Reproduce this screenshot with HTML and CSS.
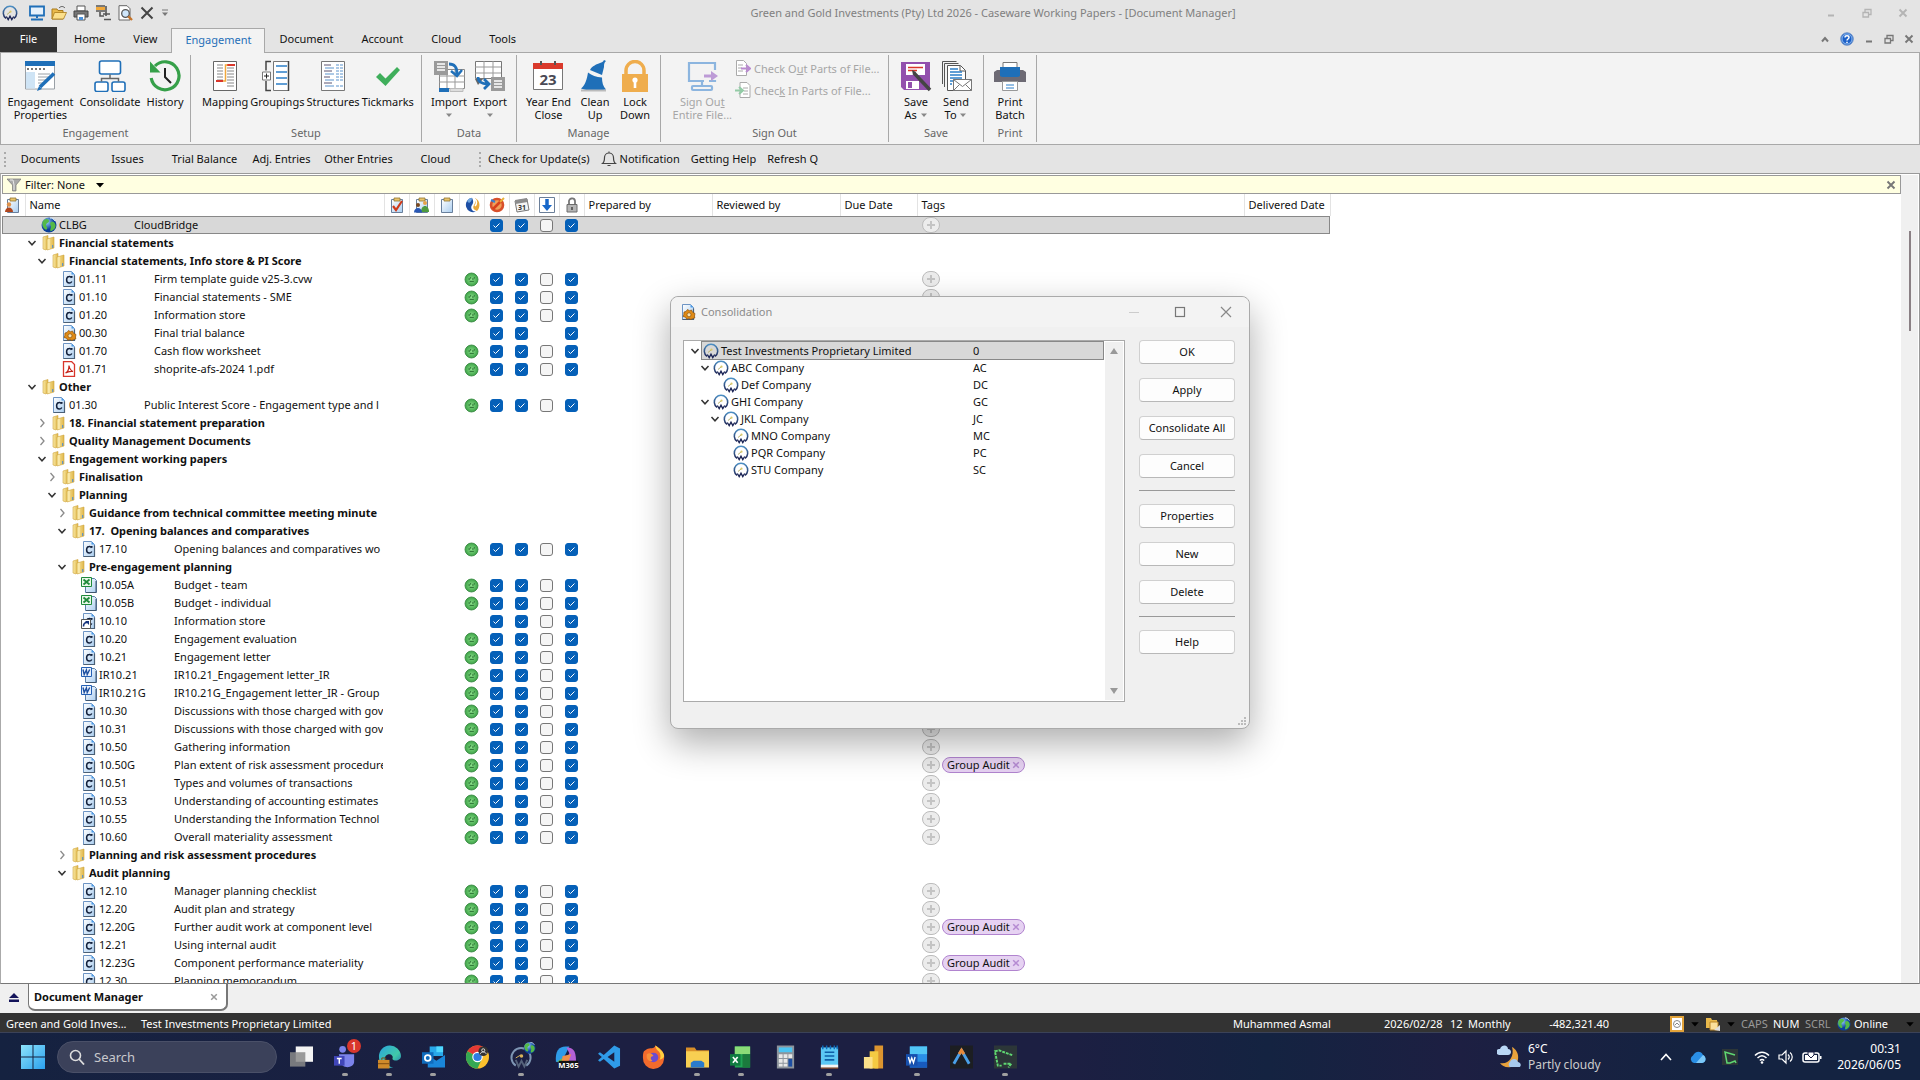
FILE: index.html
```html
<!DOCTYPE html>
<html lang="en">
<head>
<meta charset="utf-8">
<title>Green and Gold Investments (Pty) Ltd 2026 - Caseware Working Papers</title>
<link rel="stylesheet" href="styles.css">
</head>
<body>
<svg class="sprite" aria-hidden="true">
  <defs>
    <linearGradient id="gFolder" x1="0" x2="1"><stop offset="0" stop-color="#f9e9a4"/><stop offset="1" stop-color="#e0b64a"/></linearGradient>
    <linearGradient id="gPage" x1="0" x2="1" y2="1"><stop offset="0" stop-color="#fff"/><stop offset="1" stop-color="#a9cdf0"/></linearGradient>
    <radialGradient id="gGreen"><stop offset="0" stop-color="#8be08a"/><stop offset="1" stop-color="#3da347"/></radialGradient>
    <radialGradient id="gGlobe" cx=".35" cy=".3"><stop offset="0" stop-color="#9cd4ff"/><stop offset="1" stop-color="#0b3f9a"/></radialGradient>
    <linearGradient id="gRing" x2="0" y2="1"><stop offset="0" stop-color="#4c8fc4"/><stop offset="1" stop-color="#1d2657"/></linearGradient>
    <linearGradient id="gWin" x2="1" y2="1"><stop offset="0" stop-color="#8de3fb"/><stop offset="1" stop-color="#2aa0ee"/></linearGradient>
    <linearGradient id="gEdge" x2="1" y2="1"><stop offset="0" stop-color="#2aa5dd"/><stop offset=".6" stop-color="#41c9a8"/><stop offset="1" stop-color="#1766b8"/></linearGradient>
  </defs>
  <symbol id="caseware" viewBox="0 0 16 16"><path d="M4 13.400A6.700 6.700 0 1 1 12 13.400" fill="none" stroke="url(#gRing)" stroke-width="1.500"/><path d="M4.300 11.500l1.900 3 1.800-3.300 1.800 3.300 1.900-3" fill="none" stroke="#1d2657" stroke-width="1.400"/><path d="M5 9.500l3-2.500" stroke="#b9b26b" stroke-width="1"/><circle cx="8.500" cy="6.700" r="1.100" fill="#d9c96a"/></symbol>
  <symbol id="folder" viewBox="0 0 16 16"><path d="M2 2l5-1.5v12L5 15l-3-1z" fill="url(#gFolder)" stroke="#d0a640" stroke-width=".6"/><path d="M6 4l7-2v11l-7 2z" fill="url(#gFolder)" stroke="#cfa43a" stroke-width=".6"/><path d="M11.7 10v3" stroke="#4b8cd6" stroke-width="1"/><path d="M8 4v10" stroke="#fff3c0" stroke-width="1"/></symbol>
  <symbol id="page" viewBox="0 0 16 16"><path d="M2.5.5h8l3 3v12h-11z" fill="url(#gPage)" stroke="#6d94c4"/><path d="M10.500.5v3h3z" fill="#4d9be8"/><path d="M13.500 4.500v11h-11" fill="none" stroke="#4b6076" stroke-width="1.200"/></symbol>
  <symbol id="doc" viewBox="0 0 16 16"><use href="#page"/><path d="M10.800 6.700v-1.600M10.600 6.900C10 5.700 9 5.300 8.100 5.400 6.400 5.500 5.600 7 5.600 8.800s1 3.300 2.700 3.300c1.200 0 2-.7 2.500-1.600" fill="none" stroke="#12203c" stroke-width="1.500"/></symbol>
  <symbol id="gear" viewBox="0 0 16 16"><use href="#page"/><path d="M4 8l2-.5L7.500 5.500l2 1.200 2-.7 1 2.200L15 9.500l-.5 2.500.3 2-2.300.5-1.500 1-2.200-1-2 .7-1.300-2L3 12.500l.8-2z" fill="#e08b16" stroke="#8a4d08" stroke-width=".7"/><circle cx="9" cy="10.800" r="2" fill="#f8e2b0" stroke="#7a4405" stroke-width=".6"/></symbol>
  <symbol id="pdf" viewBox="0 0 16 16"><path d="M2.500.5h8l3 3v12h-11z" fill="#fff" stroke="#d8352b" stroke-width="1.300"/><path d="M4.500 12c2-1 3.500-4 3.500-7.500.5 3.500 1.500 5 4 6-3-.5-5 0-7.500 1.500z" fill="none" stroke="#c32219" stroke-width="1.200"/></symbol>
  <symbol id="xls" viewBox="0 0 16 16"><path d="M4.500 1.500h9l2 2v12h-11z" fill="url(#gPage)" stroke="#5a7fa8"/><path d="M15 4v11.500H5" fill="none" stroke="#41576e"/><path d="M.5.5h10v9H.500z" fill="#eaf7ea" stroke="#1f8a3a"/><path d="M2.500 2.500l6 5M8.500 2.500l-6 5" stroke="#1f8a3a" stroke-width="1.800"/></symbol>
  <symbol id="docx" viewBox="0 0 16 16"><path d="M4.500 1.500h9l2 2v12h-11z" fill="url(#gPage)" stroke="#5a7fa8"/><path d="M15 4v11.500H5" fill="none" stroke="#41576e"/><path d="M.5.5h10v9H.500z" fill="#eaf2fc" stroke="#2360b5"/><path d="M2 2.500l1.200 5 2.200-4.500.8 4.500 2.500-5" fill="none" stroke="#1c4fa0" stroke-width="1.400"/></symbol>
  <symbol id="link" viewBox="0 0 16 16"><use href="#doc"/><path d="M.5 6.500h9v9h-9z" fill="#fff" stroke="#555"/><path d="M2.500 13.500c0-2.500 1-4 3.500-4" fill="none" stroke="#16357e" stroke-width="1.600"/><path d="M4 8h4v4z" fill="#16357e"/></symbol>
  <symbol id="globe" viewBox="0 0 16 16"><circle cx="8" cy="8" r="7.500" fill="url(#gGlobe)"/><path d="M3 3c2-2 5-1 5 1s-3 2-3 4 2 2 1 4-4-1-4.500-4S2 4 3 3zM10 5c2-1 4 0 4.500 3s-2 5-4 6-1-3-.5-4-2-3 0-5z" fill="#54b948"/><path d="M9 1c2 0 4 1 5 3" stroke="#dff2ff" fill="none"/></symbol>
  <symbol id="face" viewBox="0 0 16 16"><circle cx="8" cy="8" r="6.900" fill="url(#gGreen)" stroke="#3c8d45"/><path d="M5.500 6.500v2M7 5.500v1.500M9.500 6.500v2M11 5.500v1.500M6 10h4.500" stroke="#256b2f"/></symbol>
  <symbol id="open" viewBox="0 0 10 10"><path d="M1.500 3L5 6.800 8.500 3" fill="none" stroke="#333" stroke-width="1.500"/></symbol>
  <symbol id="closed" viewBox="0 0 10 10"><path d="M3.500 1L7 5 3.500 9" fill="none" stroke="#8a8a8a" stroke-width="1.300"/></symbol>
  <symbol id="clip" viewBox="0 0 16 16"><path d="M2.500 2.500h11v13h-11z" fill="url(#gPage)" stroke="#687f9c"/><path d="M5 1h6v3H5z" fill="#e9c56c" stroke="#8f7430" stroke-width=".8"/></symbol>
  <symbol id="lock" viewBox="0 0 16 16"><path d="M5 8V5a3 3 0 0 1 6-1v4" fill="none" stroke="#777" stroke-width="1.800"/><path d="M3 7.500h10V15H3z" fill="#b5b5b5" stroke="#6c6c6c"/><path d="M8 10v3" stroke="#444" stroke-width="1.500"/></symbol>
  <symbol id="restore" viewBox="0 0 10 10"><path d="M1 4.500h5.500v4.500H1zM3 4V1.500h6v5H7" fill="none" stroke="currentColor" stroke-width="1.300"/></symbol>
  <symbol id="cross" viewBox="0 0 10 10"><path d="M1.500 1.500l7 7M8.500 1.500l-7 7" fill="none" stroke="currentColor" stroke-width="1.900"/></symbol>
  <symbol id="dash" viewBox="0 0 10 10"><path d="M2 7.500h6" stroke="currentColor" stroke-width="2"/></symbol>
  <symbol id="caret" viewBox="0 0 8 8"><path d="M1 2.500h6L4 6z" fill="currentColor"/></symbol>
</svg>

<div class="titlebar">
  <div class="quick">
    <svg class="i16"><use href="#caseware"/></svg>
    <button aria-label="Workstation" class="first"><svg class="i16" viewBox="0 0 16 16"><path d="M1 1.500h14v9H1z" fill="#e6f1fb" stroke="#1f6fb8" stroke-width="1.800"/><path d="M8 11v2M2 14.500h12" stroke="#1f6fb8" stroke-width="2"/></svg></button>
    <button aria-label="Open"><svg class="i16" viewBox="0 0 16 16"><path d="M1 4h5l1 1.500h5V14H1z" fill="#e9b94b" stroke="#a97b1c"/><path d="M3.500 7.500H15.500L12.500 14H1z" fill="#fbdf8b" stroke="#a97b1c" stroke-width=".8"/><path d="M8 3c2-2 4-2 6 0" fill="none" stroke="#555"/></svg></button>
    <button aria-label="Print"><svg class="i16" viewBox="0 0 16 16"><path d="M4 1h8v5H4z" fill="#fff" stroke="#555"/><path d="M1 6h14v6H1z" fill="#767676" stroke="#444"/><path d="M4 9h8v6H4z" fill="#fff" stroke="#555"/><path d="M6 12h4v3H6z" fill="#4a90d9"/></svg></button>
    <button aria-label="Tree"><svg class="i16" viewBox="0 0 16 16"><path d="M1 1h9M1 6h9" stroke="#555" stroke-width="1.500"/><path d="M1 3.500h9" stroke="#f0a83c" stroke-width="3"/><path d="M5 7v4h4M11 1v10M8 9h7M9 14.500h7" fill="none" stroke="#555" stroke-width="1.600"/></svg></button>
    <button aria-label="Preview"><svg class="i16" viewBox="0 0 16 16"><path d="M2 .7h8l3 3V15H2z" fill="#fff" stroke="#666"/><circle cx="8.500" cy="8.500" r="3.800" fill="#cfe6fa" stroke="#555" stroke-width="1.300"/><path d="M11.300 11.300l3.700 3.700" stroke="#c5742a" stroke-width="2.400"/></svg></button>
    <button aria-label="Delete"><svg class="i16" viewBox="0 0 16 16"><path d="M2.500 2.500l11 11M13.500 2.500l-11 11" stroke="#444" stroke-width="2"/></svg></button>
    <button aria-label="Customise" class="slim"><svg class="i8" viewBox="0 0 8 8"><path d="M1 1h6" stroke="#777"/><path d="M1 3.500h6L4 7z" fill="#777"/></svg></button>
  </div>
  <div class="apptitle">Green and Gold Investments (Pty) Ltd 2026 - Caseware Working Papers - [Document Manager]</div>
  <div class="winctl faded">
    <button aria-label="Minimise"><svg class="i10"><use href="#dash"/></svg></button>
    <button aria-label="Restore"><svg class="i10"><use href="#restore"/></svg></button>
    <button aria-label="Close"><svg class="i10"><use href="#cross"/></svg></button>
  </div>
</div>

<nav class="tabs">
  <a href="#" class="file">File</a><a href="#">Home</a><a href="#">View</a><a href="#" class="active">Engagement</a><a href="#">Document</a><a href="#">Account</a><a href="#">Cloud</a><a href="#">Tools</a>
  <div class="childctl">
    <button aria-label="Collapse ribbon"><svg class="i10" viewBox="0 0 10 10"><path d="M2 7.500L5 4l3 3.500" fill="none" stroke="#777" stroke-width="2"/></svg></button>
    <button aria-label="Help"><svg class="i14" viewBox="0 0 14 14"><circle cx="7" cy="7" r="6.300" fill="#1c60c8" stroke="#7597c9"/><circle cx="7" cy="7" r="5" fill="none" stroke="#a5cdf8" stroke-width=".8"/><path d="M5 5.500c0-2.300 4-2.300 4 0C9 7 7 7 7 8.500M7 9.800V11" fill="none" stroke="#fff" stroke-width="1.500"/></svg></button>
    <button aria-label="Minimise document"><svg class="i10"><use href="#dash"/></svg></button>
    <button aria-label="Restore document"><svg class="i10"><use href="#restore"/></svg></button>
    <button aria-label="Close document"><svg class="i10"><use href="#cross"/></svg></button>
  </div>
</nav>

<div class="ribbon">
  <section class="group g-eng"><div class="items">
    <button><svg viewBox="0 0 32 32"><path d="M1.500 2h29v27h-29z" fill="#fff" stroke="#9aa0a6"/><path d="M1 1h30v5H1z" fill="#1f6fb8"/><path d="M3 9h2M7 9h2M11 9h2M15 9h2M19 9h2" stroke="#777" stroke-width="2"/><path d="M2 12h9v16.500H2z" fill="#cfe4f5"/><path d="M14 14h12M14 17h12M14 20h8M14 23h6" stroke="#9aa0a6"/><path d="M16 27L30 13.500" stroke="#1f6fb8" stroke-width="3.600"/><path d="M13 31l2-5 3 3z" fill="#1f6fb8"/></svg><span>Engagement<br>Properties</span></button>
    <button><svg viewBox="0 0 32 32"><g fill="#fff" stroke="#1f6fb8" stroke-width="1.600"><rect x="5.500" y="1" width="21" height="13" rx="2"/><rect x="1" y="22" width="13" height="9.500" rx="2"/><rect x="18" y="22" width="13" height="9.500" rx="2"/></g><path d="M16 14.500v4M7.500 21.500v-3h17v3" fill="none" stroke="#666" stroke-width="1.500"/></svg><span>Consolidate</span></button>
    <button><svg viewBox="0 0 32 32"><path d="M2.200 18A14 14 0 1 0 6 6" fill="none" stroke="#36a049" stroke-width="3.200"/><path d="M1 1.500v11h10.500z" fill="#36a049"/><path d="M16 8v9l6 6" fill="none" stroke="#222" stroke-width="2"/></svg><span>History</span></button>
  </div><h2>Engagement</h2></section>
  <section class="group g-setup"><div class="items">
    <button><svg viewBox="0 0 32 32"><path d="M4.500 1.500h23v29h-23z" fill="#fff" stroke="#666"/><path d="M8 5h6M8 8h6M8 11h6M8 14h6M8 17h6M8 20h6M18 8h7M18 11h7M18 14h7M18 17h7M18 20h7M18 23h7M18 26h7" stroke="#888"/><path d="M7 21h7M18 5h8" stroke="#d9362b" stroke-width="2"/><path d="M14 21h2.500V5h2" fill="none" stroke="#f0a83c" stroke-width="1.500"/></svg><span>Mapping</span></button>
    <button><svg viewBox="0 0 32 32"><path d="M12.500 1.500h15v29h-15z" fill="#fff" stroke="#777"/><path d="M15 6h11M15 12h11M15 18h11M15 24h11" stroke="#2d7fc8" stroke-width="1.300"/><path d="M10 1.500H5v9M5 21v9.500h5M27.500 1v30" fill="none" stroke="#444" stroke-width="1.500"/><path d="M1.500 12h8v8h-8z" fill="#fff" stroke="#777"/><path d="M3 16h5M5.500 13.500v5" stroke="#222"/></svg><span>Groupings</span></button>
    <button><svg viewBox="0 0 32 32"><path d="M4.500 1.500h23v29h-23z" fill="#fff" stroke="#777"/><path d="M7 5h7M7 11h8M7 17h6M7 23h8" stroke="#5c5470"/><path d="M8 8h9M8 14h9M8 20h9M8 26h9M19 8h3M23 8h3M19 14h3M23 14h3M19 20h3M23 20h3M19 26h3M23 26h3M19 5h3M23 5h3M19 11h3M23 11h3M19 17h3M23 17h3" stroke="#5b93cc"/></svg><span>Structures</span></button>
    <button><svg viewBox="0 0 32 32"><path d="M4 17l4-4 5.500 5.500L25 7l3 3-14.500 16z" fill="#3fae5b"/></svg><span>Tickmarks</span></button>
  </div><h2>Setup</h2></section>
  <section class="group g-data"><div class="items">
    <button><svg viewBox="0 0 32 32"><path d="M6.500 9.500h25v19h-25z" fill="#fff" stroke="#888"/><path d="M6 16h26M6 22h26M14 9v19M22 9v19" stroke="#999"/><path d="M1 1h14v14H1z" fill="#9a9a9a"/><path d="M4 4h8M4 7h8M4 10h8" stroke="#fff" stroke-width="1.500"/><path d="M16 4c6 0 8 3 8 10" fill="none" stroke="#1f6fb8" stroke-width="3"/><path d="M18 11l6 5 5-6" fill="none" stroke="#1f6fb8" stroke-width="2.500"/><path d="M6 28h10v4H6z" fill="#1f6fb8"/><path d="M17 28.500h13v3H17z" fill="#ddd" stroke="#bbb"/></svg><span>Import<br><svg class="i8"><use href="#caret"/></svg></span></button>
    <button><svg viewBox="0 0 32 32"><path d="M1.500 1.500h26v17h-26z" fill="#fff" stroke="#777"/><path d="M1 7h26M1 13h26M10 1v17M19 1v17" stroke="#999"/><path d="M1 19h8l-5 6z" fill="#666"/><path d="M17 17h14v14H17z" fill="#9a9a9a"/><path d="M20 21h8M20 24h8M20 27h8" stroke="#fff" stroke-width="1.500"/><path d="M4 17c0 5 3 7 10 7M10 19l5 5-5 5" fill="none" stroke="#1f6fb8" stroke-width="2.800"/></svg><span>Export<br><svg class="i8"><use href="#caret"/></svg></span></button>
  </div><h2>Data</h2></section>
  <section class="group g-manage"><div class="items">
    <button><svg viewBox="0 0 32 32"><path d="M1.500 3.500h29v26h-29z" fill="#fff" stroke="#777"/><path d="M1 3h30v6H1z" fill="#d9392b"/><path d="M9 1v4M23 1v4" stroke="#555" stroke-width="2"/><text x="16" y="25" text-anchor="middle" class="calnum">23</text></svg><span>Year End<br>Close</span></button>
    <button><svg viewBox="0 0 32 32"><path d="M25 0l2 1c-2 2-2 3-2 6l-2 8-12-5c2-4 7-6 10-7 2-1 3-1 4-3z" fill="#1f6fb8"/><path d="M9 12.500c4 3 8 4.500 14 5 0 5 1 9 4 12-8 2-18 2-25-1 4-3 6-9 7-16z" fill="#1f6fb8"/><path d="M2 30.500h25" stroke="#bbb" stroke-width="2"/></svg><span>Clean<br>Up</span></button>
    <button><svg viewBox="0 0 32 32"><path d="M7 14V10.500a9 9 0 0 1 18 0V14" fill="none" stroke="#efad4d" stroke-width="3.500"/><path d="M3 14h26v18H3z" fill="#efad4d"/><circle cx="16" cy="20" r="2.600" fill="#fff"/><path d="M16 20v8" stroke="#fff" stroke-width="2.600"/></svg><span>Lock<br>Down</span></button>
  </div><h2>Manage</h2></section>
  <section class="group g-sign"><div class="items">
    <button disabled><svg viewBox="0 0 32 32"><g stroke="#8cb5df" fill="none" stroke-width="2.200"><path d="M29 10V3H3v18h15M29 20v1h-6M16 21v4"/><rect x="6" y="26" width="20" height="4" rx="1"/></g><path d="M18 16h9" stroke="#bd9bd6" stroke-width="3"/><path d="M25 11l7 5-7 5z" fill="#bd9bd6"/></svg><span>Sign Ou<u>t</u><br>Entire File...</span></button>
    <div class="stack">
      <button disabled><svg class="i16" viewBox="0 0 16 16"><path d="M1.500.5h7l3 3v12h-10zM3 5h5M3 8h4M3 11h5" fill="#fff" stroke="#aaa"/><path d="M6 8.500h8M11 5l4 3.500-4 3.500" stroke="#b98ad0" fill="none" stroke-width="2"/></svg><span>Check O<u>u</u>t Parts of File...</span></button>
      <button disabled><svg class="i16" viewBox="0 0 16 16"><path d="M5 .5h7l3 3v12H5zM8 6h5M9 9h4M8 12h5" fill="#fff" stroke="#aaa"/><path d="M0 8.500h7M4 5l4 3.500L4 12" stroke="#93cba6" fill="none" stroke-width="2"/></svg><span>Chec<u>k</u> In Parts of File...</span></button>
    </div>
  </div><h2>Sign Out</h2></section>
  <section class="group g-save"><div class="items">
    <button><svg viewBox="0 0 32 32"><path d="M1 2h29v28H4l-3-3z" fill="#9250ad"/><path d="M6 4h19v11H6z" fill="#fff"/><path d="M8 7.500h15M8 10.500h9" stroke="#d9362b" stroke-width="1.500"/><path d="M6 21h13v8H6z" fill="#fff"/><path d="M8 22h4v6H8z" fill="#9250ad"/><path d="M14 13l16 17" stroke="#444" stroke-width="3.500"/><path d="M12 10l1 5 3-3z" fill="#444"/></svg><span>Save<br>As <svg class="i8"><use href="#caret"/></svg></span></button>
    <button><svg viewBox="0 0 32 32"><path d="M2.500 24V1.500h14M4.500 27V3.500h14" fill="none" stroke="#555"/><path d="M7.500 5.500h13l5 5v20h-18z" fill="#fff" stroke="#555"/><path d="M20 6v5h5" fill="none" stroke="#555"/><path d="M10 9h8M10 12h12M10 15h12M10 18h12M10 21h4M10 24h2" stroke="#2d7fc8" stroke-width="1.400"/><path d="M13.500 19.500h18v11h-18z" fill="#fff" stroke="#777"/><path d="M13.500 19.500l9 7 9-7M13.500 30.500l6-6M31.500 30.500l-6-6" fill="none" stroke="#777"/></svg><span>Send<br>To <svg class="i8"><use href="#caret"/></svg></span></button>
  </div><h2>Save</h2></section>
  <section class="group g-print"><div class="items">
    <button><svg viewBox="0 0 32 32"><path d="M9 2.500h14V9H9z" fill="#fff" stroke="#777"/><path d="M0 12l3-2h26l3 2v10H0z" fill="#6d6a74"/><path d="M6 7h20v9l-2 1H8l-2-1z" fill="#1f6fb8"/><path d="M8.500 21.500h15v9h-15z" fill="#fff" stroke="#999"/><path d="M12 25h8M12 28h8" stroke="#2d7fc8"/></svg><span>Print<br>Batch</span></button>
  </div><h2>Print</h2></section>
</div>

<div class="toolbar">
  <i class="grip"></i>
  <div class="even"><button>Documents</button><button>Issues</button><button>Trial Balance</button><button>Adj. Entries</button><button>Other Entries</button><button>Cloud</button></div>
  <i class="grip"></i>
  <div class="loose"><button>Check for Update(s)</button><button><svg class="i16" viewBox="0 0 16 16"><path d="M1.500 12.500c2-1.500 2-3 2-6a4.500 4.500 0 0 1 9 0c0 3 0 4.500 2 6zM6.500 14.500h3M8 2V.500" fill="none" stroke="#444" stroke-width="1.200"/></svg>Notification</button><button>Getting Help</button><button>Refresh Q</button></div>
</div>

<main class="panel">
  <div class="sheet">
    <div class="filter">
      <svg class="i14" viewBox="0 0 14 14"><path d="M0 1h14L9 7v6H5.500V7z" fill="#a9a9a9" stroke="#777" stroke-width=".7"/><path d="M3 2h3l1 5v5" stroke="#e8e8e8" fill="none"/></svg>
      <span>Filter: None</span>
      <button aria-label="Choose filter"><svg class="i10" viewBox="0 0 10 10"><path d="M1 3h8L5 7.500z" fill="#000"/></svg></button>
      <button class="end" aria-label="Clear filter"><svg class="i10"><use href="#cross"/></svg></button>
    </div>
    <div class="scroll">
    <table class="docs">
      <colgroup><col class="c-flag"><col class="c-name"><col class="c-ico" span="8"><col class="c-who" span="2"><col class="c-due"><col class="c-tags"><col class="c-del"></colgroup>
      <thead><tr>
        <th><svg class="i16" viewBox="0 0 16 16"><use href="#clip"/><circle cx="4" cy="7.500" r="2.200" fill="#e0924b"/><path d="M0 15c0-6 8-6 8 0z" fill="#b0461d"/></svg></th>
        <th class="txt">Name</th>
        <th><svg class="i16" viewBox="0 0 16 16"><use href="#clip"/><path d="M4 9l3 4 6-9" fill="none" stroke="#cf3a1a" stroke-width="2.200"/></svg></th>
        <th><svg class="i16" viewBox="0 0 16 16"><use href="#clip"/><circle cx="4" cy="8" r="2" fill="#7a4a20"/><circle cx="11" cy="6" r="2" fill="#e5a24a"/><path d="M7 15c0-8 8-8 8 0z" fill="#4d9a3f"/><path d="M0 15.500c0-6 8-6 8 0z" fill="#2857b5"/></svg></th>
        <th><svg class="i16"><use href="#clip"/></svg></th>
        <th><svg class="i16" viewBox="0 0 16 16"><path d="M8 .8A7.200 7.200 0 1 0 12 14.500C8 15 6 11 8 8S9 3 8 .8z" fill="#1d4fa5"/><path d="M3 4c1-2 3-3 5-3 0 2-1 4-3 5z" fill="#6fa6e0"/><path d="M11 1c5 2 6 9 2 13-3-1-5-3-3-6 1-2 2-4 1-7z" fill="#e9a83a"/><path d="M11 2c2 2 2 5 0 7" stroke="#fff" fill="none" stroke-width="1.500"/></svg></th>
        <th><svg class="i16" viewBox="0 0 16 16"><circle cx="8" cy="8" r="6" fill="#f0a05a" stroke="#d8502c" stroke-width="2.600"/><path d="M4 12l8-8" stroke="#d8401c" stroke-width="2.600"/><path d="M11 5l4-4" stroke="#e9b13a" stroke-width="2"/><path d="M2 3l4 2" stroke="#377fd0" stroke-width="2"/></svg></th>
        <th><svg class="i16" viewBox="0 0 16 16"><path d="M1 4l12-2 2 11-12 2z" fill="#f4f4f4" stroke="#777"/><path d="M1 3l12-2 .5 4-12 2z" fill="#8c8c8c"/><text x="8" y="13" text-anchor="middle" class="calsmall">31</text></svg></th>
        <th><svg class="i16" viewBox="0 0 16 16"><path d="M.5.5h15v15H.500z" fill="#fff" stroke="#6b7f99"/><path d="M8 2v7" stroke="#1767c9" stroke-width="3.500"/><path d="M3 8h10l-5 6z" fill="#1767c9"/></svg></th>
        <th><svg class="i16"><use href="#lock"/></svg></th>
        <th class="txt">Prepared by</th><th class="txt">Reviewed by</th><th class="txt">Due Date</th><th class="txt">Tags</th><th class="txt">Delivered Date</th>
      </tr></thead>
      <tbody id="rows"></tbody>
    </table>
    </div>
  </div>
  <div class="vscroll"><div class="thumb"></div></div>
</main>

<div class="doctabs">
  <button class="eject" aria-label="Show tabs"><svg class="i10" viewBox="0 0 10 10"><path d="M5 0l5 5H0zM0 6.500h10v2.500H0z" fill="#14145a"/></svg></button>
  <div class="doctab"><span>Document Manager</span><button aria-label="Close tab"><svg class="i8"><use href="#cross"/></svg></button></div>
</div>

<footer class="status">
  <span class="s-file">Green and Gold Inves...</span><span>Test Investments Proprietary Limited</span>
  <div class="s-right">
    <span class="s-user">Muhammed Asmal</span><span class="s-date">2026/02/28</span><span class="s-per">12</span><span class="s-freq">Monthly</span><span class="s-amt">-482,321.40</span>
    <svg class="i16" viewBox="0 0 16 16"><path d="M1 0h14v16H1z" fill="#e2a33a"/><path d="M3 2h10v12H3z" fill="#fff"/><circle cx="8" cy="8" r="3.500" fill="none" stroke="#888"/><path d="M6 9l2-2 2 2" stroke="#888" fill="none"/></svg>
    <svg class="i10 blk"><use href="#caret"/></svg>
    <svg class="i16" viewBox="0 0 16 16"><path d="M1 2h5l1 2h5v8H1z" fill="#e9b94b"/><path d="M5 6h8v8H5z" fill="#fbdf9b" stroke="#b98529"/><path d="M9 14l6-5v6z" fill="#ddd"/></svg>
    <svg class="i10 blk"><use href="#caret"/></svg>
    <span class="key off">CAPS</span><span class="key">NUM</span><span class="key off">SCRL</span>
    <svg class="i14"><use href="#globe"/></svg><span>Online</span>
    <svg class="i10 blk last"><use href="#caret"/></svg>
  </div>
</footer>

<div class="taskbar">
  <button class="start" aria-label="Start"><svg class="i24" viewBox="0 0 24 24"><path d="M0 0h11.500v11.500H0zM12.500 0H24v11.500H12.500zM0 12.500h11.500V24H0zM12.500 12.500H24V24H12.500z" fill="url(#gWin)"/></svg></button>
  <label class="search"><svg class="i16" viewBox="0 0 16 16"><circle cx="6.500" cy="6.500" r="5" fill="none" stroke="#ddd" stroke-width="1.600"/><path d="M10 10l5 5.500" stroke="#ddd" stroke-width="1.800"/></svg><input type="text" placeholder="Search" aria-label="Search"></label>
  <div class="apps">
    <button aria-label="Task view"><svg viewBox="0 0 24 24"><path d="M6 1h18v16H6z" fill="#f4f4f4"/><path d="M0 7h16v15H0z" fill="#8a8a8a" opacity=".85"/></svg></button>
    <button class="run" aria-label="Teams"><svg viewBox="0 0 24 24"><circle cx="9" cy="4" r="3.500" fill="#7b83eb"/><path d="M5 9h16v8c0 7-13 8-14 0z" fill="#7b83eb"/><path d="M0 11h11v10H0z" fill="#4046b8"/><path d="M3 13.500h5M5.500 13.500V19" stroke="#fff" stroke-width="1.500"/></svg><b class="count">1</b></button>
    <button class="run" aria-label="Edge"><svg viewBox="0 0 24 24"><path d="M1 12a11.500 11.500 0 0 1 23-1c0 5-7 6-9 3 2-4-4-7-7-3-3 4 1 11 8 12C7 25 1 19 1 12z" fill="url(#gEdge)"/><path d="M0 15h12v9H0z" fill="#d08a2a"/><path d="M4 15v-2h4v2M0 19h12" fill="none" stroke="#7b4a10"/></svg></button>
    <button class="run" aria-label="Outlook"><svg viewBox="0 0 24 24"><path d="M8 1h14v10H8z" fill="#28a8ea"/><path d="M15 1h7v6h-7z" fill="#50d9ff"/><path d="M6 10l9 6 9-6v13H6z" fill="#1a86d9"/><path d="M0 7h12v12H0z" fill="#0f6cbd"/><circle cx="6" cy="13" r="3" fill="none" stroke="#fff" stroke-width="1.800"/></svg></button>
    <button aria-label="Chrome"><svg viewBox="0 0 24 24"><circle cx="12" cy="12" r="12" fill="#fbc02d"/><path d="M12 12L1.600 6A12 12 0 0 1 22.400 6z" fill="#e53935"/><path d="M12 12L1.600 6A12 12 0 0 0 12 24l4-9z" fill="#34a853"/><circle cx="12" cy="12" r="5.500" fill="#fff"/><circle cx="12" cy="12" r="4.300" fill="#2f7de1"/><circle cx="18" cy="6" r="5" fill="#333"/><circle cx="18" cy="5" r="1.600" fill="none" stroke="#ddd"/><path d="M15 9c0-3 6-3 6 0" fill="none" stroke="#ddd"/></svg></button>
    <button class="run" aria-label="Caseware"><svg viewBox="0 0 24 24"><path d="M6 21A10 10 0 1 1 17 21" fill="none" stroke="#7e96b4" stroke-width="2"/><path d="M6 15l3 7 3-6 3 6 3-7" fill="none" stroke="#55627a" stroke-width="2"/><circle cx="12" cy="11" r="1.800" fill="#d9b45a"/><path d="M6 13l5-3" stroke="#d9b45a"/><use href="#globe" x="14" y="-4" width="13" height="13"/></svg></button>
    <button aria-label="Microsoft 365"><svg viewBox="0 0 24 24"><path d="M2 17C1 6 5 1 12 1h4l-4 8-5 9z" fill="#2e9be8"/><path d="M3 17l6-4 5 4z" fill="#6bc24a"/><path d="M13 2c6 0 10 2 10 14H12l4-8z" fill="#b561d6"/><path d="M9 11l9-2-3 8H8z" fill="#f0904a"/><path d="M5 16h20v8H5z" fill="#111"/><text x="15" y="23" text-anchor="middle" class="m365">M365</text></svg></button>
    <button aria-label="Visual Studio Code"><svg viewBox="0 0 24 24"><path d="M17 0l6 3v18l-6 3L6 14l-4 3-2-1.500L4 12 0 8.500 2 7l4 3zM17 7l-7 5 7 5z" fill="#2f9be8" fill-rule="evenodd"/></svg></button>
    <button aria-label="Firefox"><svg viewBox="0 0 24 24"><path d="M2 6l3-2c3-2 8 0 9-4 7 4 10 9 9 14A11 11 0 0 1 1 13c0-3 0-5 1-7z" fill="#f36b2c"/><path d="M14 0c0 5 4 5 5 9s-1 6-1 6 6-1 5-5S18 3 14 0z" fill="#ffcf3f"/><circle cx="12" cy="12.500" r="5" fill="#6b4bd0"/><path d="M5 9c3-2 6 0 7 2-3 0-4 3-1 5-4 1-7-2-6-7z" fill="#f7903a"/></svg></button>
    <button class="run" aria-label="File Explorer"><svg viewBox="0 0 24 24"><path d="M0 2h9l2 3h13v8H0z" fill="#d98f28"/><path d="M0 6h24v17H0z" fill="#f8cf52"/><path d="M5 23v-5l3-2h8l3 2v5z" fill="#2a7bcc"/></svg></button>
    <button class="run" aria-label="Excel"><svg viewBox="0 0 24 24"><path d="M5 1h16v22H5z" fill="#21a354" /><path d="M5 1h16v8H5z" fill="#8bdc78"/><path d="M13 9h8v14h-8z" fill="#1b7a3d"/><path d="M0 9h11v12H0z" fill="#107c41"/><path d="M3 12l5 6M8 12l-5 6" stroke="#fff" stroke-width="1.700"/></svg></button>
    <button aria-label="Calculator"><svg viewBox="0 0 24 24"><path d="M3 0h18v24H3z" fill="#8d949c"/><path d="M5 2h14v5H5z" fill="#4bc3f2"/><path d="M5 9h4v4H5zM10 9h4v4h-4zM15 9h4v4h-4zM5 14h4v4H5zM10 14h4v4h-4zM5 19h4v3H5zM10 19h4v3h-4z" fill="#e8e8e8"/><path d="M15 14h4v8h-4z" fill="#1e4fa3"/></svg></button>
    <button class="run" aria-label="Notepad"><svg viewBox="0 0 24 24"><path d="M3 2h18v21H3z" fill="#5cc8f5"/><path d="M3 20h18v3H3z" fill="#f4f4f4"/><path d="M3 23.500h18" stroke="#c46a2a"/><path d="M7 7h10M7 11h10M7 15h10" stroke="#0f5fa8" stroke-width="1.600"/><path d="M5 0v4M9 0v4M13 0v4M17 0v4M20 0v4" stroke="#0f6cbd" stroke-width="1.500"/></svg></button>
    <button aria-label="Power BI"><svg viewBox="0 0 24 24"><path d="M13 0h9v24h-9z" fill="#dc952f"/><path d="M8 6h9v18H8z" fill="#f4ca42"/><path d="M2 12h9v12H2z" fill="#fbe08a"/></svg></button>
    <button class="run" aria-label="Word"><svg viewBox="0 0 24 24"><path d="M4 1h18v22H4z" fill="#2b8fe6"/><path d="M4 1h18v8H4z" fill="#52c6f5"/><path d="M4 17h18v6H4z" fill="#185abd"/><path d="M0 9h12v12H0z" fill="#1650ae"/><path d="M2.500 12l1.700 6L6 13l1.800 5 1.700-6" fill="none" stroke="#fff" stroke-width="1.400"/></svg></button>
    <button aria-label="Launcher"><svg viewBox="0 0 24 24"><path d="M0 0h24v24H0z" fill="#1c1e22"/><path d="M4 19L12 5l8 14" fill="none" stroke="#4aa0e8" stroke-width="3"/><path d="M9.500 9L12 5l2.500 4" fill="none" stroke="#e88a3a" stroke-width="3"/></svg></button>
    <button class="run" aria-label="Remote tool"><svg viewBox="0 0 24 24"><path d="M0 0h24v24H0z" fill="#2c3638"/><path d="M19 10L5 5 1 6l3 15h4M10 19h8l-3 4" fill="none" stroke="#5fd873" stroke-width="2" stroke-dasharray="3 1"/></svg></button>
  </div>
  <div class="tray">
    <div class="weather"><svg class="i24" viewBox="0 0 24 24"><path d="M15 2c8 4 9 17-1 20-5 1-9-1-11-4 8 2 15-6 12-16z" fill="#e8a23c"/><path d="M2 10a3 3 0 0 1 1-6c2-5 8-4 8 0 4 0 4 6 0 6z" fill="#b9d7f5"/><path d="M13 22a3 3 0 0 1 0-5c1-4 7-4 8 0 4 1 3 5 1 5z" fill="#a6c9ee"/></svg><span>6°C<br><em>Partly cloudy</em></span></div>
    <div class="sys">
    <svg class="i16" viewBox="0 0 16 16"><path d="M3 11l5-5.500 5 5.500" fill="none" stroke="#fff" stroke-width="1.600"/></svg>
    <svg class="i16 wide" viewBox="0 0 16 16"><path d="M4 14a4 4 0 0 1-1-7.500C5 2 11 1 13 6c4 2 3 8-1 8z" fill="#2a8fe6"/><path d="M6 14l7-8c4 2 3 8-1 8z" fill="#7cc8f8"/></svg>
    <svg class="i16 wide" viewBox="0 0 16 16"><path d="M0 0h16v16H0z" fill="#2c3638"/><path d="M13 6L3 3l2 11h3l5-2 1 2" fill="none" stroke="#5fd873" stroke-width="1.500"/></svg>
    <svg class="i16 wide" viewBox="0 0 16 16"><path d="M1 6.500c4-4.500 10-4.500 14 0M3.500 9c3-3 6-3 9 0M5.800 11.500c1.500-1.500 3-1.500 4.400 0" fill="none" stroke="#fff" stroke-width="1.500"/><circle cx="8" cy="13.500" r="1.300" fill="#fff"/></svg>
    <svg class="i16" viewBox="0 0 16 16"><path d="M1 6h3l4-4v12l-4-4H1z" fill="none" stroke="#fff" stroke-width="1.200"/><path d="M10 5.500c1.500 1.500 1.500 3.500 0 5M12 3.500c3 2.500 3 6.500 0 9" fill="none" stroke="#fff" stroke-width="1.200"/></svg>
    <svg class="i20" viewBox="0 0 20 16"><rect x="1" y="4" width="16" height="9" rx="2" fill="none" stroke="#fff" stroke-width="1.500"/><path d="M3 6h12v5H3zM18 7h1.500v3H18z" fill="#fff"/><path d="M7 0v3M11 0v3M6 3h6v3l-3 3-3-3z" fill="#fff" stroke="#1b2145" stroke-width="1"/></svg>
    </div>
    <div class="clock">00:31<br>2026/06/05</div>
  </div>
</div>

<div class="dialog" role="dialog" aria-labelledby="dlgTitle">
  <div class="dlghead"><svg class="i16"><use href="#gear"/></svg><span id="dlgTitle">Consolidation</span>
    <button aria-label="Minimise" class="dim"><svg class="i12" viewBox="0 0 12 12"><path d="M1 6.500h10" stroke="#ccc"/></svg></button>
    <button aria-label="Maximise"><svg class="i12" viewBox="0 0 12 12"><rect x="1.500" y="1.500" width="9" height="9" fill="none" stroke="#777" stroke-width="1.200"/></svg></button>
    <button aria-label="Close"><svg class="i12" viewBox="0 0 12 12"><path d="M1 1l10 10M11 1L1 11" stroke="#888" stroke-width="1.200"/></svg></button>
  </div>
  <div class="dlgbody">
    <div class="entities">
      <ul id="entities"></ul>
      <div class="miniscroll"><svg class="i8" viewBox="0 0 8 8"><path d="M4 1l4 6H0z" fill="#999"/></svg><svg class="i8" viewBox="0 0 8 8"><path d="M4 7L0 1h8z" fill="#999"/></svg></div>
    </div>
    <div class="actions">
      <button>OK</button><button>Apply</button><button>Consolidate All</button><button>Cancel</button><hr><button>Properties</button><button>New</button><button>Delete</button><hr><button>Help</button>
    </div>
  </div>
  <svg class="sizer i8" viewBox="0 0 8 8"><path d="M6 0h2v2H6zM6 3h2v2H6zM3 3h2v2H3zM6 6h2v2H6zM3 6h2v2H3zM0 6h2v2H0z" fill="#bbb"/></svg>
</div>
<script src="app.js"></script>
</body>
</html>
```
FILE: styles.css
```css
* { box-sizing: border-box; }
body {
  margin: 0;
  height: 100vh;
  min-height: 640px;
  display: flex;
  flex-direction: column;
  overflow: hidden;
  position: relative;
  background: #e4e4e4;
  color: #111;
  font: 11px/14px "Noto Sans", "Open Sans", sans-serif;
}
button {
  border: 0;
  padding: 0;
  background: none;
  color: inherit;
  font: inherit;
  display: inline-flex;
  align-items: center;
  justify-content: center;
}
a { color: inherit; text-decoration: none; }
svg { display: block; flex: none; }
.sprite { position: absolute; width: 0; height: 0; }
.i8 { width: 8px; height: 8px; }
.i10 { width: 10px; height: 10px; }
.i12 { width: 12px; height: 12px; }
.i14 { width: 14px; height: 14px; }
.i16 { width: 16px; height: 16px; }
.i20 { width: 20px; height: 16px; }
.i24 { width: 24px; height: 24px; }

/* title bar */
.titlebar { flex: none; height: 27px; display: grid; grid-template-columns: 1fr auto 1fr; align-items: center; padding-bottom: 2px; }
.quick { display: flex; align-items: center; gap: 6px; padding-left: 2px; }
.quick .first { margin-left: 5px; }
.apptitle { color: #808080; padding-left: 66px; }
.winctl { display: flex; justify-content: flex-end; gap: 26px; padding-right: 12px; }
.faded { color: #b4b4b4; }

/* ribbon tabs */
.tabs { flex: none; height: 25px; display: flex; align-items: stretch; }
.tabs a { display: flex; align-items: center; padding: 0 14px 2px; }
.tabs .file { background: #333; color: #fff; width: 57px; justify-content: center; padding: 0 0 2px; margin-right: 3px; }
.tabs .active { color: #1f6fb8; background: #f3f3f3; border: 1px solid #a8a8a8; border-bottom: 0; margin: 1px 0 -1px; padding: 0 13px 3px; z-index: 1; }
.childctl { margin-left: auto; display: flex; align-items: center; gap: 10px; padding: 0 6px 2px 0; color: #777; }

/* ribbon */
.ribbon { flex: none; height: 93px; display: flex; background: #f3f3f3; border: 1px solid #a8a8a8; padding: 2px 0; }
.group { display: flex; flex-direction: column; flex: none; border-right: 1px solid #a8a8a8; }
.group h2 { margin: auto 0 2px; text-align: center; font: inherit; color: #666; }
.items { display: flex; justify-content: center; padding-top: 5px; }
.items > button { flex-direction: column; justify-content: flex-start; padding: 0 3px; gap: 3px; }
.items > button > svg { width: 32px; height: 32px; }
.items span { line-height: 13px; white-space: nowrap; text-align: center; }
.items .i8 { display: inline-block; color: #888; }
.ribbon button:disabled { color: #a6a6a6; }
.g-eng { width: 190px; }
.g-setup { width: 231px; }
.g-setup .items { padding-left: 4px; }
.g-setup .items > button { padding: 0 1px; }
.g-data { width: 95px; }
.g-manage { width: 144px; }
.g-manage .items > button { padding: 0 4px; }
.g-sign { width: 228px; }
.g-save { width: 95px; }
.g-save .items > button { padding: 0 4px; }
.g-print { width: 53px; }
.stack { display: flex; flex-direction: column; gap: 6px; }
.stack button { justify-content: flex-start; gap: 3px; white-space: nowrap; }
.calnum { font: 700 15px "Noto Sans", sans-serif; fill: #4a4a55; }
.calsmall { font: 700 7px "Noto Sans", sans-serif; fill: #333; }

/* shortcut toolbar */
.toolbar { flex: none; height: 28px; display: flex; align-items: center; padding-left: 4px; }
.grip { width: 3px; height: 15px; border-left: 2px dotted #aaa; }
.even { display: flex; padding: 0 5px; }
.even button { width: 77px; }
.loose { display: flex; gap: 11px; padding-left: 6px; }
.loose button { gap: 3px; }

/* document list */
.panel { flex: 1; min-height: 0; display: flex; background: #fff; border: 1px solid #999; border-left-color: #aaa; border-bottom-color: #777; padding: 1px 1px 0; }
.sheet { flex: 1; min-width: 0; display: flex; flex-direction: column; }
.filter { flex: none; height: 19px; display: flex; align-items: center; gap: 4px; padding: 0 4px; background: #ffffe1; border: 1px solid #999; }
.filter button { margin-left: 6px; }
.filter .end { margin-left: auto; color: #777; }
.scroll { flex: 1; min-height: 0; overflow: hidden; }
.vscroll { width: 17px; background: #f0f0f0; padding-top: 56px; }
.thumb { width: 2px; height: 100px; margin: 0 auto; background: #8a8084; }
.docs { table-layout: fixed; width: 1328px; border-collapse: collapse; }
.c-flag { width: 23px; }
.c-name { width: 359px; }
.c-ico { width: 25px; }
.c-who { width: 128px; }
.c-due { width: 77px; }
.c-tags { width: 327px; }
.c-del { width: 86px; }
.docs th { height: 22px; padding: 0; font-weight: 400; text-align: left; border-right: 1px solid #e3e3e3; white-space: nowrap; }
.docs th svg { margin: 0 auto; }
.docs .txt { padding-left: 4px; }
.docs td { height: 18px; padding: 0; }
.docs .sel { background: #d8d8d8; outline: 1px solid #888; outline-offset: -1px; }
.node { display: flex; align-items: center; height: 18px; margin-right: 1px; overflow: hidden; white-space: nowrap; }
.node .tw { width: 14px; margin-right: 2px; flex: none; }
.node .i16 { margin-right: 2px; }
.node.bold { font-weight: 700; }
.code { width: 75px; flex: none; }
.d1 { padding-left: 10px; }
.d2 { padding-left: 20px; }
.d3 { padding-left: 30px; }
.d4 { padding-left: 40px; }
.docs td > .face { width: 15px; height: 15px; margin: 0 auto; }
.docs input {
  appearance: none;
  display: block;
  width: 13px;
  height: 13px;
  margin: 0 auto;
  border: 1px solid #777;
  border-radius: 3px;
  background: #f5f5f5;
}
.docs input:checked {
  border-color: #0560b8;
  background: #0560b8 url("data:image/svg+xml,%3Csvg xmlns='http://www.w3.org/2000/svg' viewBox='0 0 11 11'%3E%3Cpath d='M2.5 5.500l2 2 4-4' fill='none' stroke='white' stroke-width='1'/%3E%3C/svg%3E");
}
.tagcell { display: flex; align-items: center; gap: 2px; padding-left: 5px; }
.plus { width: 18px; height: 16px; border: 1px solid #bcbcbc; border-radius: 8px; background: #ececec; }
.chip { height: 16px; padding: 0 4px; gap: 2px; display: flex; align-items: center; border: 1px solid #b184cf; border-radius: 8px; background: #e6d2f2; color: #111; }
.chip svg { color: #b58ad2; }

/* open document tabs */
.doctabs { flex: none; height: 29px; display: flex; background: #f0f0f0; align-items: flex-start; }
.eject { width: 28px; height: 28px; }
.doctab { width: 200px; height: 27px; display: flex; align-items: center; justify-content: space-between; padding: 0 8px 0 5px; background: #fff; border: 1px solid #777; border-width: 0 2px 2px 1px; border-radius: 0 0 7px 7px; font-weight: 700; }
.doctab button { color: #999; }

/* status bar */
.status { flex: none; height: 19px; display: flex; align-items: center; background: #333; color: #fff; padding: 2px 0 0 6px; white-space: nowrap; }
.s-file { width: 135px; }
.s-right { margin-left: auto; width: 687px; display: flex; align-items: center; }
.s-user { width: 151px; }
.s-date { width: 66px; }
.s-per { width: 18px; }
.s-freq { width: 63px; }
.s-amt { width: 78px; margin-right: 60px; text-align: right; }
.blk { color: #000; margin: 0 5px; }
.key { width: 32px; }
.off { color: #999; }
.status .i14 { margin-right: 3px; }
.last { margin-left: auto; }

/* desktop task bar */
.taskbar { flex: none; height: 48px; display: flex; align-items: center; color: #fff; border-top: 1px solid #3b4258; background: linear-gradient(90deg, #152240, #1c1f42 30%, #1c1f42 56%, #142341 66%, #1d1f42 76%, #142341 88%); }
.start { width: 45px; margin: 0 2px 0 10px; }
.search { width: 220px; height: 32px; display: flex; align-items: center; gap: 9px; padding: 0 11px; border-radius: 16px; background: #3b415a; border: 1px solid #4a5068; }
.search input { flex: 1; min-width: 0; border: 0; padding: 0; background: none; color: #ddd; font: 13px/18px "Noto Sans", sans-serif; outline: 0; }
.search input::placeholder { color: #c8c8cc; opacity: 1; }
.apps { display: flex; margin-left: 2px; }
.apps button { position: relative; width: 44px; height: 46px; }
.apps button > svg { width: 23px; height: 24px; overflow: visible; }
.run::after { content: ""; position: absolute; bottom: 4px; left: 19px; width: 6px; height: 3px; border-radius: 2px; background: #a0a0a0; }
.count { position: absolute; top: 5px; right: 6px; width: 14px; height: 14px; border-radius: 7px; background: #d9372c; font-weight: 400; }
.m365 { font: 700 8px "Noto Sans", sans-serif; fill: #fff; }
.tray { margin-left: auto; display: flex; align-items: center; padding-right: 19px; font-size: 12px; line-height: 16px; }
.weather { display: flex; align-items: center; gap: 7px; width: 161px; }
.weather em { font-style: normal; color: #ccc; }
.sys { display: flex; align-items: center; gap: 8px; width: 165px; }
.sys .wide { margin-left: 8px; }
.clock { text-align: right; width: 78px; }

/* consolidation window */
.dialog { position: absolute; left: calc(50% - 290px); top: 296px; width: 580px; height: 433px; display: flex; flex-direction: column; background: #f0f0f0; border: 1px solid #aaa; border-radius: 8px; box-shadow: 0 14px 36px rgba(0, 0, 0, .32); }
.dlghead { height: 30px; display: flex; align-items: center; gap: 5px; padding: 0 17px 0 9px; background: #f3f3f3; color: #8c8c8c; border-radius: 8px 8px 0 0; }
.dlghead button { margin-left: 29px; }
.dlghead .dim { margin-left: auto; }
.dlgbody { flex: 1; display: flex; gap: 14px; padding: 13px 14px 26px 12px; }
.entities { flex: 1; display: flex; border: 1px solid #aaa; background: #fff; padding: 1px; }
.entities ul { flex: 1; margin: 0; padding: 0 2px 0 3px; list-style: none; }
.entities li { display: flex; align-items: center; height: 17px; }
.entities li .tw { width: 14px; flex: none; }
.bar { flex: 1; display: flex; align-items: center; height: 17px; padding-left: 1px; }
.bar .i16 { margin-right: 2px; }
.bar b { font-weight: 400; flex: 1; }
.bar i { font-style: normal; width: 130px; }
.bar.on { background: #d8d8d8; outline: 1px solid #888; }
.miniscroll { width: 18px; background: #f0f0f0; display: flex; flex-direction: column; align-items: center; justify-content: space-between; padding: 5px 0; }
.actions { width: 96px; display: flex; flex-direction: column; }
.actions button { height: 24px; margin-bottom: 14px; background: #fdfdfd; border: 1px solid #d0d0d0; border-bottom-color: #b8b8b8; border-radius: 4px; }
.actions hr { width: 100%; margin: -2px 0 13px; border: 0; border-top: 1px solid #999; }
.sizer { position: absolute; right: 3px; bottom: 3px; }
```
FILE: app.js
```js
// kind, depth, code or folder title, document title, tag
const rows = [
  ['globe', 0, 'CLBG', 'CloudBridge'],
  ['open', 0, 'Financial statements'],
  ['open', 1, 'Financial statements, Info store & PI Score'],
  ['doc', 2, '01.11', 'Firm template guide v25-3.cvw'],
  ['doc', 2, '01.10', 'Financial statements - SME'],
  ['doc', 2, '01.20', 'Information store'],
  ['gear', 2, '00.30', 'Final trial balance'],
  ['doc', 2, '01.70', 'Cash flow worksheet'],
  ['pdf', 2, '01.71', 'shoprite-afs-2024 1.pdf'],
  ['open', 0, 'Other'],
  ['doc', 1, '01.30', 'Public Interest Score - Engagement type and l'],
  ['closed', 1, '18. Financial statement preparation'],
  ['closed', 1, 'Quality Management Documents'],
  ['open', 1, 'Engagement working papers'],
  ['closed', 2, 'Finalisation'],
  ['open', 2, 'Planning'],
  ['closed', 3, 'Guidance from technical committee meeting minute'],
  ['open', 3, '17.\u00a0 Opening balances and comparatives'],
  ['doc', 4, '17.10', 'Opening balances and comparatives wo'],
  ['open', 3, 'Pre-engagement planning'],
  ['xls', 4, '10.05A', 'Budget - team'],
  ['xls', 4, '10.05B', 'Budget - individual'],
  ['link', 4, '10.10', 'Information store'],
  ['doc', 4, '10.20', 'Engagement evaluation'],
  ['doc', 4, '10.21', 'Engagement letter'],
  ['docx', 4, 'IR10.21', 'IR10.21_Engagement letter_IR'],
  ['docx', 4, 'IR10.21G', 'IR10.21G_Engagement letter_IR - Group'],
  ['doc', 4, '10.30', 'Discussions with those charged with gov'],
  ['doc', 4, '10.31', 'Discussions with those charged with gov'],
  ['doc', 4, '10.50', 'Gathering information'],
  ['doc', 4, '10.50G', 'Plan extent of risk assessment procedure', 'Group Audit'],
  ['doc', 4, '10.51', 'Types and volumes of transactions'],
  ['doc', 4, '10.53', 'Understanding of accounting estimates'],
  ['doc', 4, '10.55', 'Understanding the Information Technol'],
  ['doc', 4, '10.60', 'Overall materiality assessment'],
  ['closed', 3, 'Planning and risk assessment procedures'],
  ['open', 3, 'Audit planning'],
  ['doc', 4, '12.10', 'Manager planning checklist'],
  ['doc', 4, '12.20', 'Audit plan and strategy'],
  ['doc', 4, '12.20G', 'Further audit work at component level', 'Group Audit'],
  ['doc', 4, '12.21', 'Using internal audit'],
  ['doc', 4, '12.23G', 'Component performance materiality', 'Group Audit'],
  ['doc', 4, '12.30', 'Planning memorandum'],
];

const icon = (id, cls) => `<svg class="${cls}"><use href="#${id}"/></svg>`;
const esc = s => s.replace('&', '&amp;');
const twisty = kind => `<button class="tw" aria-label="Toggle">${icon(kind, 'i10')}</button>`;

function documentRow([kind, depth, code, title, tag]) {
  if (kind === 'open' || kind === 'closed') {
    return `<tr><td></td><td><div class="node bold d${depth}">${twisty(kind)}${icon('folder', 'i16')}${esc(code)}</div></td><td colspan="13"></td></tr>`;
  }
  const box = (name, on) => `<td><input type="checkbox" aria-label="${code} ${name}"${on ? ' checked' : ''}></td>`;
  const synced = !['globe', 'gear', 'link'].includes(kind);
  const chip = tag ? `<span class="chip">${tag}${icon('cross', 'i8')}</span>` : '';
  return `<tr${kind === 'globe' ? ' class="sel"' : ''}><td></td>
    <td><div class="node d${depth}"><span class="tw"></span>${icon(kind, 'i16')}<span class="code">${code}</span><span>${title}</span></div></td>
    <td></td><td></td><td></td><td>${synced ? icon('face', 'face') : ''}</td>
    ${box('roll forward', true)}${box('year end', true)}${kind === 'gear' ? '<td></td>' : box('download', false)}${box('lock', true)}
    <td></td><td></td><td></td>
    <td><div class="tagcell"><button class="plus" aria-label="Add tag to ${code}"><svg class="i8" viewBox="0 0 8 8"><path d="M4 0v8M0 4h8" stroke="#c4c4c4" stroke-width="2"/></svg></button>${chip}</div></td><td></td></tr>`;
}
document.getElementById('rows').innerHTML = rows.map(documentRow).join('');

const entities = [
  [0, 'Test Investments Proprietary Limited', '0', true],
  [1, 'ABC Company', 'AC', true],
  [2, 'Def Company', 'DC', false],
  [1, 'GHI Company', 'GC', true],
  [2, 'JKL Company', 'JC', true],
  [3, 'MNO Company', 'MC', false],
  [3, 'PQR Company', 'PC', false],
  [3, 'STU Company', 'SC', false],
];
document.getElementById('entities').innerHTML = entities.map(([depth, name, code, parent]) =>
  `<li class="d${depth}">${parent ? twisty('open') : '<span class="tw"></span>'}<div class="bar${depth ? '' : ' on'}">${icon('caseware', 'i16')}<b>${name}</b><i>${code}</i></div></li>`).join('');
```
